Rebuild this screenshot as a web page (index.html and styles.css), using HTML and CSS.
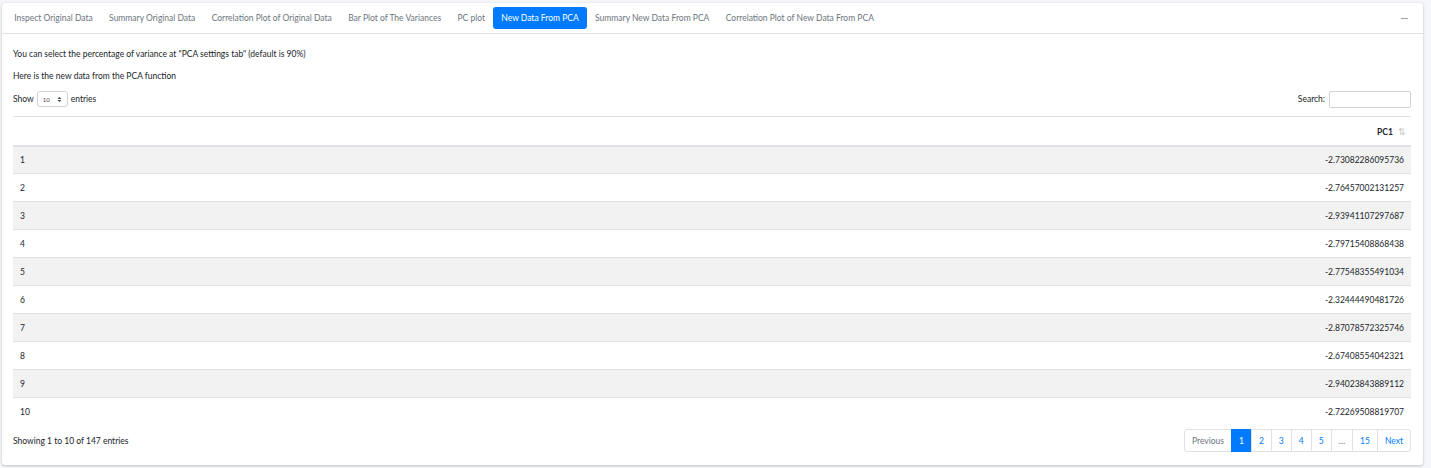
FILE: index.html
```html
<!DOCTYPE html>
<html>
<head>
<meta charset="utf-8">
<link rel="stylesheet" href="styles.css">
</head>
<body>
<div class="card">
  <div class="card-header">
    <ul class="tabs">
      <li><a>Inspect Original Data</a></li>
      <li><a>Summary Original Data</a></li>
      <li><a>Correlation Plot of Original Data</a></li>
      <li><a>Bar Plot of The Variances</a></li>
      <li><a>PC plot</a></li>
      <li><a class="active">New Data From PCA</a></li>
      <li><a>Summary New Data From PCA</a></li>
      <li><a>Correlation Plot of New Data From PCA</a></li>
    </ul>
    <span class="collapse-btn"></span>
  </div>
  <div class="card-body">
    <p class="line">You can select the percentage of variance at "PCA settings tab" (default is 90%)</p>
    <p class="line">Here is the new data from the PCA function</p>
    <div class="controls">
      <label class="length">Show <span class="select">10 <svg width="5" height="7" viewBox="0 0 5 7"><path d="M0.5 3 L2.5 1 L4.5 3 Z M0.5 4 L2.5 6 L4.5 4 Z" fill="#444"/></svg></span> entries</label>
      <label class="search">Search: <span class="input"></span></label>
    </div>
    <table class="data">
      <thead>
        <tr><th class="idx"></th><th class="val">PC1 <span class="sort">⇅</span></th></tr>
      </thead>
      <tbody>
        <tr><td class="idx">1</td><td class="val">-2.73082286095736</td></tr>
        <tr><td class="idx">2</td><td class="val">-2.76457002131257</td></tr>
        <tr><td class="idx">3</td><td class="val">-2.93941107297687</td></tr>
        <tr><td class="idx">4</td><td class="val">-2.79715408868438</td></tr>
        <tr><td class="idx">5</td><td class="val">-2.77548355491034</td></tr>
        <tr><td class="idx">6</td><td class="val">-2.32444490481726</td></tr>
        <tr><td class="idx">7</td><td class="val">-2.87078572325746</td></tr>
        <tr><td class="idx">8</td><td class="val">-2.67408554042321</td></tr>
        <tr><td class="idx">9</td><td class="val">-2.94023843889112</td></tr>
        <tr><td class="idx">10</td><td class="val">-2.72269508819707</td></tr>
      </tbody>
    </table>
    <div class="footer">
      <div class="info">Showing 1 to 10 of 147 entries</div>
      <ul class="pager">
        <li class="prev">Previous</li>
        <li class="current">1</li>
        <li>2</li>
        <li>3</li>
        <li>4</li>
        <li>5</li>
        <li class="ellipsis">…</li>
        <li>15</li>
        <li class="next">Next</li>
      </ul>
    </div>
  </div>
</div>
</body>
</html>
```

FILE: styles.css
```css
html, body {
  margin: 0;
  padding: 0;
  background: #f4f6f9;
}
body {
  font-family: "Source Sans Pro", Lato, "Liberation Sans", sans-serif;
  font-size: 8.5px;
  color: #212529;
  padding: 3px 8px 3px 2px;
  height: 468px;
  box-sizing: border-box;
}
.card {
  background: #fff;
  border-radius: 3px;
  box-shadow: 0 0 1px rgba(0,0,0,.15), 0 1px 3px rgba(0,0,0,.2);
  height: 462px;
  display: flex;
  flex-direction: column;
}
.card-header {
  display: flex;
  align-items: center;
  justify-content: space-between;
  height: 30px;
  padding: 0 15px 0 4px;
  border-bottom: 1px solid #dfe1e4;
}
.tabs {
  list-style: none;
  margin: 0;
  padding: 0;
  display: flex;
}
.tabs a {
  display: block;
  height: 22px;
  line-height: 22px;
  padding: 0 8.2px;
  color: #6c757d;
  border-radius: 3px;
}
.tabs a.active {
  background: #007bff;
  color: #fff;
}
.collapse-btn {
  width: 7px;
  height: 1px;
  background: #9aa0a6;
}
.card-body {
  padding: 0 12px 0 11px;
  flex: 1;
  display: flex;
  flex-direction: column;
}
.line {
  margin: 0;
  height: 22px;
  line-height: 22px;
}
.line:first-child {
  margin-top: 9px;
}
.controls {
  display: flex;
  justify-content: space-between;
  align-items: center;
  height: 24px;
}
.length {
  display: flex;
  align-items: center;
  gap: 3px;
}
.select {
  display: inline-flex;
  align-items: center;
  justify-content: space-between;
  width: 31px;
  height: 16px;
  box-sizing: border-box;
  padding: 0 5px 0 5px;
  border: 1px solid #ced4da;
  border-radius: 3px;
  font-size: 6px;
  color: #444;
}
.search {
  display: flex;
  align-items: center;
  gap: 4px;
}
.input {
  display: block;
  width: 82px;
  height: 17px;
  box-sizing: border-box;
  border: 1px solid #ced4da;
  border-radius: 2px;
}
.data {
  width: 100%;
  border-collapse: collapse;
  margin-top: 5px;
}
.data th {
  height: 29px;
  box-sizing: border-box;
  border-top: 1px solid #dee2e6;
  border-bottom: 2px solid #dee2e6;
  font-weight: bold;
  text-align: right;
  padding: 1px 5px 0 7px;
}
.data th.idx {
  text-align: left;
}
.sort {
  color: #c6c9cc;
  font-weight: normal;
  font-size: 9px;
  margin-left: 3px;
}
.data td {
  height: 28px;
  box-sizing: border-box;
  padding: 1px 7px 0;
  border-top: 1px solid #dee2e6;
}
.data tbody tr:first-child td {
  border-top: none;
}
.data tbody tr:nth-child(odd) td {
  background: #f2f2f2;
}
.data td.val {
  text-align: right;
}
.footer {
  display: flex;
  justify-content: space-between;
  align-items: center;
  margin-top: 3px;
}
.info {
  padding-top: 2px;
}
.pager {
  list-style: none;
  margin: 0;
  padding: 0;
  display: flex;
}
.pager li {
  height: 23px;
  line-height: 22px;
  box-sizing: border-box;
  padding: 0 7px;
  border: 1px solid #dee2e6;
  margin-left: -1px;
  color: #007bff;
}
.pager li.prev {
  color: #6c757d;
  border-radius: 3px 0 0 3px;
  margin-left: 0;
}
.pager li.next {
  border-radius: 0 3px 3px 0;
}
.pager li.current {
  background: #007bff;
  border-color: #007bff;
  color: #fff;
}
.pager li.ellipsis {
  color: #6c757d;
}
```
